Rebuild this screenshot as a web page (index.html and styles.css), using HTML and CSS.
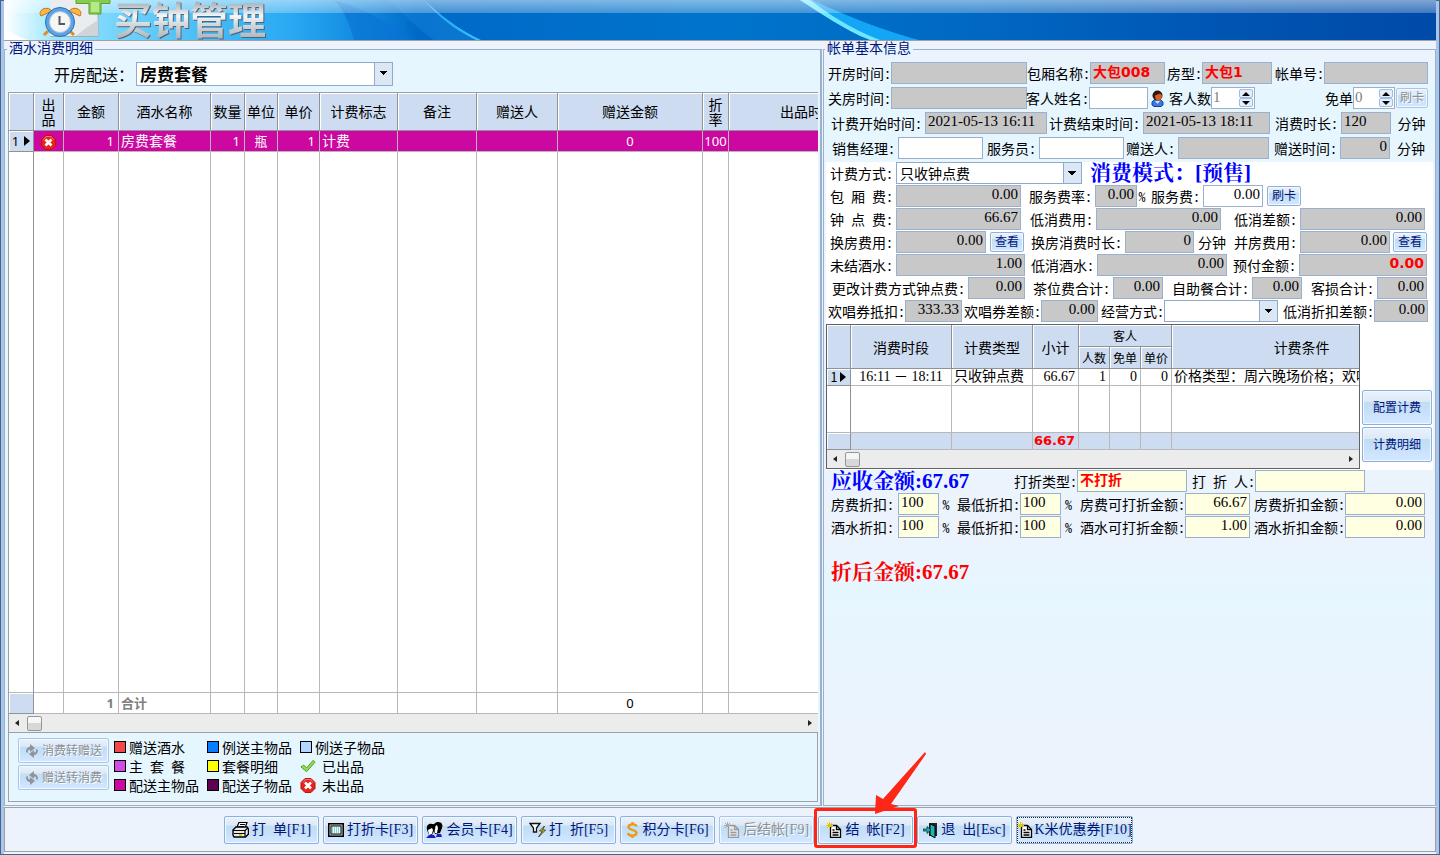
FILE: index.html
```html
<!DOCTYPE html>
<html lang="zh-CN">
<head>
<meta charset="utf-8">
<title>买钟管理</title>
<link rel="stylesheet" href="styles.css">
</head>
<body>
<svg class="defs" width="0" height="0" aria-hidden="true">
  <defs>
    <symbol id="i-cross" viewBox="0 0 15 15"><path d="M4.500 .5h6l4 4v6l-4 4h-6l-4-4v-6z" fill="#e8231d" stroke="#c01010"/><path d="M2.500 4.500l2.500-3h5l2.500 3" stroke="#ff7a66" fill="none"/><path d="M4.500 4.500l6 6M10.500 4.500l-6 6" stroke="#fff" stroke-width="2.600"/></symbol>
    <symbol id="i-tick" viewBox="0 0 17 14"><path d="M1 8l3-2 3 3 7-8 2 2-9 10z" fill="#8ee04e" stroke="#4c9a2a"/></symbol>
    <symbol id="i-doc" viewBox="0 0 16 16"><path d="M4.500 3.500h6l4 4v8h-10z" fill="#fff" stroke="#000" stroke-width="1.300"/><path d="M10.500 3.500v4h4M6.500 8h2M6.500 10.500h6M6.500 13h6" stroke="#000" fill="none" stroke-width="1.300"/><path d="M3.500 0v7M0 3.500h7M1 1l5 5M6 1L1 6" stroke="#e3c800"/></symbol>
    <symbol id="i-doc-off" viewBox="0 0 16 16"><path d="M4.500 3.500h6l4 4v8h-10z" fill="#e4eaf2" stroke="#999" stroke-width="1.300"/><path d="M10.500 3.500v4h4M6.500 8h2M6.500 10.500h6M6.500 13h6" stroke="#999" fill="none" stroke-width="1.300"/><path d="M3.500 0v5M0 3.500h6M1 1l4 4M6 1L1 6" stroke="#aaa"/></symbol>
    <symbol id="i-swap" viewBox="0 0 14 16"><path d="M1 9c0-3.500 2-5 4-5V1l5 4-5 4V6.500C3 6.500 2.500 8 3 10zM13 7c0 3.500-2 5-4 5v3l-5-4 5-4v2.500c2 0 2.500-1.500 2-3.500z" fill="#8e949b"/></symbol>
    <linearGradient id="g-hair" x1="0" y1="0" x2="1" y2="0"><stop offset="0" stop-color="#fff"/><stop offset=".12" stop-color="#9be6ff"/><stop offset="1" stop-color="#18a9f5" stop-opacity="0"/></linearGradient>
  </defs>
</svg>

<div class="shell">
  <header class="banner">
    <svg class="swoosh" viewBox="0 0 1432 40" preserveAspectRatio="none" aria-hidden="true">
      <path d="M0 0h420c-20 20-25 30-5 40H0z" fill="url(#g-hair)"/>
      <path d="M0 28C10 34 16 38 24 40H0z" fill="#fff"/>
      <path d="M330 0C365 10 390 26 405 40H350C345 22 340 10 330 0z" fill="#0a74d4" opacity=".7"/>
      <path d="M420 0C435 14 455 30 477 40H472C450 30 432 14 420 0z" fill="#35c2ff"/>
      <path d="M385 0H420C435 14 455 30 472 40H430C410 26 398 12 385 0z" fill="#1d8be0" opacity=".35"/>
      <path d="M796 0C815 12 840 30 868 40H915C870 28 830 10 808 0z" fill="#13a6f7"/>
      <path d="M796 0C815 12 840 30 866 40H876C845 28 825 14 806 0z" fill="#6fe6ff"/>
    </svg>
    <svg class="clock" viewBox="0 0 76 40" aria-hidden="true">
      <path d="M12 -2h48v38.500H12" fill="#e9edf0" stroke="#a8adb2"/><path d="M48 28l12-8v16H38z" fill="#cfd4d8"/>
      <path d="M38 -1h34v4.500H63v10.500H51V3.500H38z" fill="#86cc52" stroke="#5aa02c"/><path d="M53 2h8v10h-8z" fill="#b6ea86"/>
      <path d="M10 31l-4 4M32 31l4 4" stroke="#e58a1a" stroke-width="3"/>
      <path d="M3 16c-4-6 6-11 11-5zM42 16c4-6-6-11-11-5z" fill="#fdb64a" stroke="#c9740f"/>
      <circle cx="22" cy="22" r="14.500" fill="#58a5ea" stroke="#2d6cb5"/>
      <circle cx="22" cy="22" r="10.500" fill="#f6f6f4" stroke="#b9c4d0"/>
      <path d="M21.500 16v8H27" fill="none" stroke="#55595f" stroke-width="2"/>
    </svg>
    <h1 class="title">买钟管理</h1>
  </header>

  <main class="main">
    <section class="panel left">
      <h2 class="legend">酒水消费明细</h2>
      <div class="package">
        <label for="pkg">开房配送：</label>
        <select id="pkg" class="select big"><option>房费套餐</option></select>
      </div>
      <div class="gridbox">
        <table class="items">
          <colgroup><col class="w25"><col class="w30"><col class="w55"><col class="w92"><col class="w34"><col class="w33"><col class="w42"><col class="w78"><col class="w79"><col class="w81"><col class="w145"><col class="w26"><col></colgroup>
          <thead><tr><th></th><th class="stack">出<br>品</th><th>金额</th><th>酒水名称</th><th>数量</th><th>单位</th><th>单价</th><th>计费标志</th><th>备注</th><th>赠送人</th><th>赠送金额</th><th class="stack">折<br>率</th><th class="cut">出品时间</th></tr></thead>
          <tbody>
            <tr class="picked"><th class="rownum">1<svg width="6" height="10" viewBox="0 0 6 10"><path d="M0 0v10l6-5z"/></svg></th><td class="mid"><svg width="15" height="15"><use href="#i-cross"/></svg></td><td class="num">1</td><td>房费套餐</td><td class="num">1</td><td class="mid">瓶</td><td class="num">1</td><td>计费</td><td></td><td></td><td class="mid">0</td><td class="mid">100</td><td></td></tr>
            <tr class="blank"><td></td><td></td><td></td><td></td><td></td><td></td><td></td><td></td><td></td><td></td><td></td><td></td><td></td></tr>
          </tbody>
          <tfoot><tr><th></th><td></td><td class="num sum">1</td><td class="sum">合计</td><td></td><td></td><td></td><td></td><td></td><td></td><td class="mid">0</td><td></td><td></td></tr></tfoot>
        </table>
        <div class="scroll"><i class="arrow back"></i><i class="thumb"></i><i class="arrow fwd"></i></div>
      </div>
      <div class="keybox">
        <div class="swaps">
          <button class="btn" disabled><svg width="14" height="16"><use href="#i-swap"/></svg>消费转赠送</button>
          <button class="btn" disabled><svg class="flip" width="14" height="16"><use href="#i-swap"/></svg>赠送转消费</button>
        </div>
        <ul class="keys">
          <li><i class="chip red"></i>赠送酒水</li><li><i class="chip blue"></i>例送主物品</li><li><i class="chip sky"></i>例送子物品</li>
          <li><i class="chip violet"></i>主 套 餐</li><li><i class="chip yellow"></i>套餐明细</li><li class="wide"><svg width="16" height="14"><use href="#i-tick"/></svg>已出品</li>
          <li><i class="chip magenta"></i>配送主物品</li><li><i class="chip plum"></i>配送子物品</li><li class="wide"><svg width="16" height="15"><use href="#i-cross"/></svg>未出品</li>
        </ul>
      </div>
    </section>

    <section class="panel right">
      <h2 class="legend">帐单基本信息</h2>
      <div class="rows top">
        <div class="row r1">
          <label for="a1">开房时间:</label><input id="a1" class="gray" readonly>
          <label for="a2">包厢名称:</label><input id="a2" class="gray hot" readonly value="大包008">
          <label for="a3">房型:</label><input id="a3" class="gray hot" readonly value="大包1">
          <label for="a4">帐单号:</label><input id="a4" class="gray" readonly>
        </div>
        <div class="row r2">
          <label for="b1">关房时间:</label><input id="b1" class="gray" readonly>
          <label for="b2">客人姓名:</label><input id="b2">
          <svg class="person" width="13" height="17" viewBox="0 0 13 17" aria-hidden="true"><path d="M1 12l3-3h5l3 3v3l-2 1.500H3L1 15z" fill="#3b78e0" stroke="#1b3f9c"/><path d="M4 11l2.500 3L9 11z" fill="#cfe4ff"/><circle cx="6.500" cy="5.500" r="5" fill="#2b1a12"/><path d="M4 5.500l5-2 2 2c0 3-1.500 5-4 5-2 0-3-2-3-5z" fill="#d9601c"/></svg>
          <label for="b3">客人数</label><div class="spin"><input id="b3" value="1"><span><button aria-label="增加客人数"></button><button class="down" aria-label="减少客人数"></button></span></div>
          <label for="b4">免单</label><div class="spin"><input id="b4" value="0"><span><button aria-label="增加免单"></button><button class="down" aria-label="减少免单"></button></span></div>
          <button class="btn small" disabled>刷卡</button>
        </div>
        <div class="row r3 loose">
          <label for="c1">计费开始时间:</label><input id="c1" class="gray" readonly value="2021-05-13 16:11">
          <label for="c2">计费结束时间:</label><input id="c2" class="gray" readonly value="2021-05-13 18:11">
          <label for="c3">消费时长:</label><input id="c3" class="gray" readonly value="120"><span class="unit">分钟</span>
        </div>
        <div class="row r4 loose">
          <label for="d1">销售经理:</label><input id="d1">
          <label for="d2">服务员:</label><input id="d2">
          <label for="d3">赠送人:</label><input id="d3" class="gray" readonly>
          <label for="d4">赠送时间:</label><input id="d4" class="gray r" readonly value="0"><span class="unit">分钟</span>
        </div>
      </div>
      <div class="white">
        <div class="rows tight">
          <div class="row r5 loose">
            <label for="e1">计费方式:</label><select id="e1" class="select"><option>只收钟点费</option></select>
            <strong class="mode">消费模式：[预售]</strong>
          </div>
          <div class="row r6 loose">
            <label for="f1">包 厢 费:</label><input id="f1" class="gray r" readonly value="0.00">
            <label for="f2">服务费率:</label><input id="f2" class="gray r" readonly value="0.00"><span class="unit">%</span>
            <label for="f3">服务费:</label><input id="f3" class="r" value="0.00"><button class="btn small">刷卡</button>
          </div>
          <div class="row r7 loose">
            <label for="g1">钟 点 费:</label><input id="g1" class="gray r" readonly value="66.67">
            <label for="g2">低消费用:</label><input id="g2" class="gray r" readonly value="0.00">
            <label for="g3">低消差额:</label><input id="g3" class="gray r" readonly value="0.00">
          </div>
          <div class="row r8 loose">
            <label for="h1">换房费用:</label><input id="h1" class="gray r" readonly value="0.00"><button class="btn small">查看</button>
            <label for="h2">换房消费时长:</label><input id="h2" class="gray r" readonly value="0"><span class="unit">分钟</span>
            <label for="h3">并房费用:</label><input id="h3" class="gray r" readonly value="0.00"><button class="btn small">查看</button>
          </div>
          <div class="row r9 loose">
            <label for="i1">未结酒水:</label><input id="i1" class="gray r" readonly value="1.00">
            <label for="i2">低消酒水:</label><input id="i2" class="gray r" readonly value="0.00">
            <label for="i3">预付金额:</label><input id="i3" class="gray r hot" readonly value="0.00">
          </div>
          <div class="row r10 loose">
            <label for="j1">更改计费方式钟点费:</label><input id="j1" class="gray r" readonly value="0.00">
            <label for="j2">茶位费合计:</label><input id="j2" class="gray r" readonly value="0.00">
            <label for="j3">自助餐合计:</label><input id="j3" class="gray r" readonly value="0.00">
            <label for="j4">客损合计:</label><input id="j4" class="gray r" readonly value="0.00">
          </div>
          <div class="row r11">
            <label for="k1">欢唱券抵扣:</label><input id="k1" class="gray r" readonly value="333.33">
            <label for="k2">欢唱券差额:</label><input id="k2" class="gray r" readonly value="0.00">
            <label for="k3">经营方式:</label><select id="k3" class="select"><option></option></select>
            <label for="k4">低消折扣差额:</label><input id="k4" class="gray r" readonly value="0.00">
          </div>
        </div>
        <div class="billing">
          <div class="billbox">
            <table class="bill">
              <colgroup><col class="w24"><col class="w101"><col class="w81"><col class="w46"><col class="w31"><col class="w31"><col class="w31"><col></colgroup>
              <thead>
                <tr><th rowspan="2"></th><th rowspan="2">消费时段</th><th rowspan="2">计费类型</th><th rowspan="2">小计</th><th colspan="3" class="sub">客人</th><th rowspan="2" class="far">计费条件</th></tr>
                <tr><th class="sub">人数</th><th class="sub">免单</th><th class="sub edge">单价</th></tr>
              </thead>
              <tbody>
                <tr><th class="rownum">1<svg width="6" height="10" viewBox="0 0 6 10"><path d="M0 0v10l6-5z"/></svg></th><td class="mid">16:11 － 18:11</td><td>只收钟点费</td><td class="num">66.67</td><td class="num">1</td><td class="num">0</td><td class="num">0</td><td>价格类型：周六晚场价格；欢唱券</td></tr>
                <tr class="blank"><td></td><td></td><td></td><td></td><td></td><td></td><td></td><td></td></tr>
              </tbody>
              <tfoot><tr><th></th><td></td><td></td><td class="total">66.67</td><td></td><td></td><td></td><td></td></tr></tfoot>
            </table>
            <div class="scroll"><i class="arrow back"></i><i class="thumb"></i><i class="arrow fwd"></i></div>
          </div>
          <div class="side">
            <button class="btn tall">配置计费</button>
            <button class="btn tall">计费明细</button>
          </div>
        </div>
      </div>
      <div class="rows tight">
        <div class="row r12">
          <strong class="due">应收金额:67.67</strong>
          <label for="l1">打折类型:</label><input id="l1" class="cream hot" value="不打折">
          <label for="l2">打 折 人:</label><input id="l2" class="cream">
        </div>
        <div class="row r13">
          <label for="m1">房费折扣:</label><input id="m1" class="cream" value="100"><span class="unit">%</span>
          <label for="m2">最低折扣:</label><input id="m2" class="cream" value="100"><span class="unit">%</span>
          <label for="m3">房费可打折金额:</label><input id="m3" class="cream r" value="66.67">
          <label for="m4">房费折扣金额:</label><input id="m4" class="cream r" value="0.00">
        </div>
        <div class="row r13">
          <label for="n1">酒水折扣:</label><input id="n1" class="cream" value="100"><span class="unit">%</span>
          <label for="n2">最低折扣:</label><input id="n2" class="cream" value="100"><span class="unit">%</span>
          <label for="n3">酒水可打折金额:</label><input id="n3" class="cream r" value="1.00">
          <label for="n4">酒水折扣金额:</label><input id="n4" class="cream r" value="0.00">
        </div>
      </div>
      <strong class="after">折后金额:67.67</strong>
    </section>
  </main>

  <footer class="bar">
    <button class="btn key"><svg width="17" height="16" viewBox="0 0 17 16"><path d="M5 5l2-4.500h8L13 6" fill="#fff" stroke="#000" stroke-width="1.200"/><path d="M8 2.500h5M7 4.500h5" stroke="#000"/><path d="M1 8l3-3h11l1.500 2v5l-3 3H2l-1-2z" fill="#e8e8e8" stroke="#000" stroke-width="1.400"/><path d="M1 8.500h12v6M13 8.500L16 6M2 11.500h11" stroke="#000" fill="none" stroke-width="1.200"/><path d="M7 13h3" stroke="#e3c800" stroke-width="2"/></svg>打&ensp;单[F1]</button>
    <button class="btn key"><svg width="16" height="14" viewBox="0 0 16 14"><rect x=".75" y=".75" width="14.500" height="12.500" fill="#c8c8c8" stroke="#000" stroke-width="1.500"/><rect x="3" y="3" width="10" height="8" fill="#eaffff" stroke="#000"/><path d="M4 5h8M4 7h8M4 9h8" stroke="#18a7a7" stroke-dasharray="1 1"/></svg>打折卡[F3]</button>
    <button class="btn key"><svg width="17" height="16" viewBox="0 0 17 16"><path d="M7 7c0-5 2-7 5-7 4 0 5 3 4 6l-2 5-5 1z" fill="#000"/><path d="M8 5l3-2 1 3-1 5H9z" fill="#fff"/><path d="M1 8c-1-5 2-7 5-6 3 0 4 2 3 5l-3 6H3z" fill="#000"/><path d="M2 8l4-2 1 2-1 4-3 1z" fill="#fff"/><path d="M0 16l3-3h5l2 3zM10 15l1-3h4l1 3z" fill="#1a1acb"/></svg>会员卡[F4]</button>
    <button class="btn key"><svg width="17" height="16" viewBox="0 0 17 16"><path d="M1 1.500h10L7.500 6v4h-3V6z" fill="#fff" stroke="#111" stroke-width="1.300"/><path d="M15.500 4l-5 5h3l-4 6 7-7h-3z" fill="#ffe600" stroke="#222" stroke-width=".8"/></svg>打&ensp;折[F5]</button>
    <button class="btn key"><svg width="13" height="16" viewBox="0 0 13 16"><path d="M10.500 4.500C10 1.500 2.500 1.500 2.500 5s8 2.500 8 6-8 3.500-8.500 0M6.500 0v3M6.500 13v3" fill="none" stroke="#e89a13" stroke-width="2.300"/></svg>积分卡[F6]</button>
    <button class="btn key" disabled><svg width="16" height="16"><use href="#i-doc-off"/></svg>后结帐[F9]</button>
    <div class="marked">
      <button class="btn key"><svg width="16" height="16"><use href="#i-doc"/></svg>结&ensp;帐[F2]</button>
      <i class="ring"></i>
      <svg class="pointer" width="56" height="64" viewBox="0 0 56 64" aria-hidden="true"><path d="M53 0L54 2 19 52 27 54 3 62 4 43 11 47z" fill="#fe2617"/></svg>
    </div>
    <button class="btn key"><svg width="15" height="16" viewBox="0 0 15 16"><path d="M6 1h8v13H6z" fill="#222"/><path d="M7 2l5 2v12l-5-3z" fill="#1fb5b5" stroke="#000"/><path d="M0 7h4V4.500L8 8l-4 3.500V9H0z" fill="#12b3b3" stroke="#000" stroke-width=".6"/></svg>退&ensp;出[Esc]</button>
    <button class="btn key focus"><svg width="16" height="16"><use href="#i-doc"/></svg>K米优惠券[F10]</button>
  </footer>
</div>
</body>
</html>
```

FILE: styles.css
```css
* { box-sizing: border-box; }
body {
  margin: 0;
  color: #000;
  font: 14px/16px "Noto Sans Mono CJK SC", "Noto Sans CJK SC", sans-serif;
}
input, select, button { font: inherit; color: inherit; margin: 0; min-width: 0; border-radius: 0; }
.defs { position: absolute; }

.shell {
  display: flex;
  flex-direction: column;
  height: 100vh;
  min-height: 720px;
  padding-bottom: 3px;
  background: #ecf3fd;
  border-left: 4px solid #a9c6ea;
  border-right: 4px solid #a9c6ea;
  outline: 1px solid #45658f;
  outline-offset: -1px;
  overflow: hidden;
}

/* banner */
.banner {
  position: relative;
  display: flex;
  flex: none;
  height: 41px;
  padding-left: 34px;
  border-bottom: 1px solid #a0a0a0;
  background: linear-gradient(90deg, #27b4f8 0, #1a9cee 20%, #0069c8 29%, #0074cc 50%, #0068c3 68%, #0055b3 85%, #004aa8 100%);
  overflow: hidden;
}
.banner::after {
  content: "";
  position: absolute;
  inset: 0 0 auto;
  height: 13px;
  background: linear-gradient(rgba(255,255,255,.5), rgba(255,255,255,.26));
}
.swoosh { position: absolute; inset: 0; width: 100%; height: 40px; }
.clock { position: relative; flex: none; width: 76px; height: 40px; z-index: 1; }
.title {
  position: relative;
  z-index: 1;
  margin: 0;
  height: 40px;
  font-size: 38px;
  line-height: 36px;
  font-weight: 900;
  color: transparent;
  background: linear-gradient(#9aa5ae 0, #f4f6f8 40%, #d5dade 60%, #a9b2ba 100%);
  -webkit-background-clip: text;
  background-clip: text;
  filter: drop-shadow(1px 1px 0 #56616c);
}

/* panels */
.main {
  flex: 1;
  min-height: 0;
  display: grid;
  grid-template-columns: 818fr 613fr;
  gap: 1px;
  padding-top: 8px;
}
.panel {
  display: flex;
  flex-direction: column;
  min-width: 0;
  min-height: 0;
  border: 1px solid #9ab0cc;
}
.left { background: #e6f6ff; padding: 0 2px 3px 3px; border-right-width: 2px; }
.right {
  padding: 0 2px;
  background: linear-gradient(#ecf3fd 0, #e6f6ff 40px, #e6f6ff 75px, #ecf3fd 480px, #e6f6ff 540px, #ecf3fd 700px);
}
.legend {
  align-self: flex-start;
  margin: -12px 0 2px;
  padding: 0 2px;
  font-size: 14px;
  line-height: 18px;
  font-weight: 400;
  color: #00147a;
  background: linear-gradient(#ecf3fd 60%, #e6f6ff 60%);
}
.left .legend { margin-left: -1px; }
.right .legend { margin-left: -1px; }

/* left: package picker */
.package { display: flex; align-items: center; gap: 2px; padding: 4px 0 6px 46px; font-size: 16px; }
.select {
  appearance: none;
  width: 100%;
  height: 22px;
  padding: 0 3px;
  border: 1px solid #8faacb;
  background:
    conic-gradient(from -45deg at 50% 100%, #000 90deg, transparent 0) calc(100% - 5px) 8px / 8px 4px no-repeat,
    linear-gradient(#8faacb, #8faacb) calc(100% - 17px) 0 / 1px 100% no-repeat,
    linear-gradient(#dbe7f5, #dbe7f5) 100% 0 / 17px 100% no-repeat,
    #fff;
}
.select.big { width: 257px; height: 24px; font-size: 17px; font-weight: 700; line-height: 20px; }

/* tables */
.gridbox { flex: 1; min-height: 0; display: flex; flex-direction: column; border: 1px solid #a0a0a0; border-right: 0; background: #fff; }
table { width: 100%; table-layout: fixed; border-collapse: separate; border-spacing: 0; }
th, td { padding: 0; font-weight: 400; white-space: nowrap; overflow: hidden; border-right: 1px solid #b8b8b8; border-bottom: 1px solid #b8b8b8; }
th { background: #cddcf0; border-color: #8f9296; box-shadow: inset 1px 1px #fff; }
td { text-align: left; padding: 0 2px; }
td.num { text-align: right; padding-right: 3px; }
td.mid { text-align: center; padding: 0; }
td svg { vertical-align: middle; }
tr > :last-child:not(.edge) { border-right: 0; }
.blank td { height: auto; }
.blank td:first-child { border-right-color: #8f9296; }
.rownum { font-size: 13px; }
.rownum svg { margin-left: 5px; }

.items { flex: 1; min-height: 0; font-family: "Noto Sans", "Noto Sans CJK SC", sans-serif; }
.items thead th { height: 38px; }
.items .stack { line-height: 15px; }
.items .cut { text-align: left; padding-left: 51px; }
.items tbody tr:first-child > *, .items tfoot tr > * { height: 21px; line-height: 18px; }
.items .num, .items .mid { font-size: 13px; }
.items td.num { padding-right: 4px; }
.items .picked td { background: #cc08a0; color: #fff; }
.items .sum { color: #808080; font-weight: 700; font-size: 13px; }
.w24 { width: 24px; } .w25 { width: 25px; } .w26 { width: 26px; } .w30 { width: 30px; }
.w31 { width: 31px; } .w33 { width: 33px; } .w34 { width: 34px; } .w42 { width: 42px; }
.w46 { width: 46px; } .w55 { width: 55px; } .w78 { width: 78px; } .w79 { width: 79px; }
.w81 { width: 81px; } .w92 { width: 92px; } .w101 { width: 101px; } .w145 { width: 145px; }

.scroll { flex: none; display: flex; align-items: center; height: 18px; padding: 0 6px; background: #ececec; }
.arrow { border: 3px solid transparent; }
.arrow.back { border-right: 4px solid #222; border-left: 0; }
.arrow.fwd { border-left: 4px solid #222; border-right: 0; margin-left: auto; }
.thumb { width: 15px; height: 15px; margin-left: 8px; border: 1px solid #979797; border-radius: 2px; background: linear-gradient(#f6f6f6 50%, #d8d8d8 50%); }

/* left: colour key */
.keybox { display: flex; gap: 5px; padding: 5px 9px 7px; border: 1px solid #a0a0a0; border-top: 0; }
.swaps { display: grid; gap: 2px; align-content: start; }
.keys { display: grid; grid-template-columns: 93px 93px 93px; align-content: start; margin: 0; padding: 0; list-style: none; row-gap: 1px; }
.keys li { display: flex; align-items: center; gap: 3px; height: 18px; white-space: nowrap; }
.keys .wide { gap: 6px; }
.chip { width: 12px; height: 12px; border: 1px solid #000; }
.chip.red { background: #f54747; } .chip.blue { background: #0a7dff; } .chip.sky { background: #b4d5ff; }
.chip.violet { background: #d24be8; } .chip.yellow { background: #ffff00; }
.chip.magenta { background: #cc08a0; } .chip.plum { background: #5c0450; }

/* buttons */
.btn {
  display: flex;
  align-items: center;
  justify-content: center;
  gap: 3px;
  padding: 0;
  height: 25px;
  border: 1px solid #8ab0dc;
  border-radius: 2px;
  box-shadow: inset 0 0 0 1px #f2f8ff;
  background: linear-gradient(#eaf1fa 0, #dde9f7 32%, #c0def2 34%, #c6e0fa 60%, #d4e8ff 100%);
  color: #00147a;
  font-family: "Liberation Serif", "Noto Sans CJK SC", serif;
  white-space: nowrap;
}
.btn:disabled { color: #8c9196; border-color: #a9c6ea; text-shadow: 1px 1px #fff; }
.swaps .btn { width: 91px; font-size: 12px; }
.flip { transform: scaleX(-1); }
.btn.small { height: 20px; width: 100%; font-size: 12px; }
.btn.tall { height: 35px; width: 100%; font-size: 12px; }

/* right: form rows */
.rows { display: grid; gap: 3px; padding: 4px 1px 0 2px; }
.rows.top { padding-bottom: 3px; }
.rows.tight { gap: 1px; padding-top: 0; }
.row { display: grid; align-items: center; height: 22px; }
.row > * { min-width: 0; }
.row label { display: flex; justify-content: flex-end; white-space: pre; }
.row.loose label { padding-right: 3px; }
.row .unit { text-align: center; white-space: nowrap; }
input {
  width: 100%;
  height: 22px;
  padding: 0 2px 4px;
  border: 1px solid #9ab0cc;
  background: #fff;
  font-family: "Liberation Serif", "Noto Sans CJK SC", serif;
  font-size: 15px;
  outline: 0;
}
input.gray { background: #c8c8c8; }
input.cream { background: #ffffe1; }
input.r { text-align: right; }
input.hot { color: #f00; font-weight: 700; font-size: 14px; font-family: "DejaVu Sans", "Noto Sans CJK SC", sans-serif; }
.r1 { grid-template-columns: 63fr 136fr 63fr 75fr 37fr 70fr 52fr 104fr 4fr; }
.r2 { grid-template-columns: 63fr 136fr 62fr 59fr 19fr 44fr 44fr 98fr 42fr 33fr 4fr; }
.r3 { grid-template-columns: 97fr 122fr 96fr 127fr 71fr 50fr 41fr; }
.r4 { grid-template-columns: 70fr 85fr 56fr 85fr 54fr 91fr 71fr 50fr 42fr; }
.r5 { grid-template-columns: 68fr 186fr 350fr; }
.r6 { grid-template-columns: 68fr 125fr 74fr 42fr 10fr 56fr 60fr 38fr 131fr; }
.r7 { grid-template-columns: 68fr 125fr 75fr 125fr 79fr 125fr 7fr; }
.r8 { grid-template-columns: 68fr 90fr 38fr 101fr 69fr 36fr 70fr 90fr 37fr 5fr; }
.r9 { grid-template-columns: 68fr 129fr 72fr 130fr 72fr 128fr 5fr; }
.r10 { grid-template-columns: 140fr 57fr 88fr 50fr 89fr 50fr 75fr 50fr 5fr; }
.r11 { grid-template-columns: 77fr 57fr 79fr 57fr 66fr 114fr 96fr 54fr 4fr; }
.r12 { grid-template-columns: 185fr 64fr 110fr 68fr 110fr 67fr; }
.r13 { grid-template-columns: 70fr 41fr 14fr 67fr 41fr 15fr 109fr 65fr 95fr 80fr 7fr; }
.r13 label:first-child { padding-right: 4px; }
.r6 .small, .r8 .small { justify-self: end; width: 34px; }
.r2 .small { justify-self: end; width: 32px; }
.person { justify-self: center; }
.spin { display: flex; height: 22px; border: 1px solid #9ab0cc; background: #fff; }
.spin input { flex: 1; height: 20px; border: 0; padding: 0 1px 2px; color: #808080; }
.spin span { display: flex; flex-direction: column; width: 16px; padding: 1px; }
.spin button { flex: 1; display: grid; place-items: center; padding: 0; border: 1px solid #9dbce0; border-radius: 2px; background: #e4effb; }
.spin button::before { content: ""; border: 4px solid transparent; border-top: 0; border-bottom: 4px solid #000; }
.spin .down::before { border-top: 4px solid #000; border-bottom: 0; }

.mode, .due, .after { font-weight: 700; font-size: 21px; line-height: 22px; white-space: nowrap; font-family: "Liberation Serif", "Noto Serif CJK SC", "Noto Sans CJK SC", serif; }
.mode { color: #00f; padding-left: 8px; }
.due { color: #00f; padding-left: 3px; }
.after { color: #f00; padding: 23px 0 0 5px; }

.white { background: #fff; padding-bottom: 1px; }
.billing { display: flex; gap: 2px; padding-top: 2px; }
.billbox { flex: 534 1 0; min-width: 0; display: flex; flex-direction: column; height: 145px; border: 1px solid #5f6368; }
.side { flex: 70 1 0; display: grid; align-content: end; gap: 2px; padding: 0 1px 7px 0; }
.bill { flex: 1; }
.bill thead th { height: 22px; }
.bill .sub { font-size: 12px; }
.bill .far { text-align: center; padding-left: 72px; }
.bill tbody tr:first-child > *, .bill tfoot tr > * { height: 17px; line-height: 16px; }
.bill td { font-family: "Liberation Serif", "Noto Sans CJK SC", serif; }
.bill tfoot td { background: #cddcf0; }
.bill .total { color: #f00; font-weight: 700; font-size: 13px; font-family: "DejaVu Sans", sans-serif; padding: 0 1px; }
.bill .rownum svg { margin-left: 3px; }

/* bottom bar */
.bar {
  flex: none;
  display: flex;
  align-items: center;
  gap: 4px;
  height: 45px;
  margin-top: 1px;
  padding-left: 219px;
  border: 1px solid #a0a0a0;
}
.key { flex: none; width: 95px; height: 28px; }
.key.focus { width: 117px; gap: 1px; outline: 1px dotted #222; outline-offset: -2px; }
.marked { position: relative; }
.ring { position: absolute; inset: -8px -4px -4px -4px; border: 3px solid #fe2617; border-radius: 3px; pointer-events: none; }
.pointer { position: absolute; left: 54px; bottom: 28px; pointer-events: none; }
```
